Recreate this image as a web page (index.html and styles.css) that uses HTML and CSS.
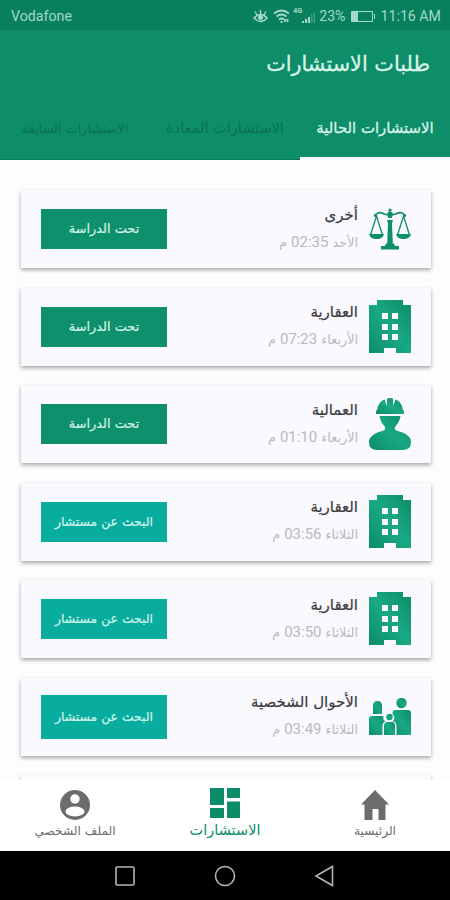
FILE: index.html
```html
<!DOCTYPE html>
<html lang="ar" dir="rtl">
  <head>
    <meta charset="utf-8">
    <title>طلبات الاستشارات</title>
    <link rel="stylesheet" href="styles.css">
  </head>
  <body>
    <svg class="defs" width="0" height="0">
      <defs>
        <linearGradient id="green" x1="0" y1="1" x2="1" y2="0">
          <stop offset="0" stop-color="#0c8c68" />
          <stop offset="0.5" stop-color="#1aa884" />
          <stop offset="1" stop-color="#0c8c68" />
        </linearGradient>
        <symbol id="scales" viewBox="0 0 42 42">
          <g fill="none" stroke="#0c8f6b">
            <path d="M6 7Q10 3 15 6Q18 7 21 6Q24 7 27 6Q32 3 36 7" stroke-width="1.700" />
            <path d="M7.500 8L1.500 27M7.500 8L13.500 27M34.500 8L28.500 27M34.500 8L40.500 27" stroke-width="1.300" />
          </g>
          <g fill="#0c8f6b">
            <circle cx="21" cy="2.200" r="1.600" />
            <circle cx="6.500" cy="7.500" r="1.600" />
            <circle cx="35.500" cy="7.500" r="1.600" />
            <path d="M19 4h4l1 3-1.500 3h-3L18 7zM18 12h6l-1 3 .800 21h-5.600L19 15zM17 35.500h8l1 2.500h4v3.500H12V38h4z" />
            <path d="M0 26h15q-1 5-7.500 5T0 26zM27 26h15q-1 5-7.500 5T27 26z" />
          </g>
        </symbol>
        <symbol id="building" viewBox="0 0 42 54">
          <path fill="url(#green)" fill-rule="evenodd" d="M8 0h26v5h8v48H27v-5H15v5H0V5h8zM13 13v6h6v-6zM23 13v6h6v-6zM13 24v6h6v-6zM23 24v6h6v-6zM13 34v6h6v-6zM23 34v6h6v-6z" />
        </symbol>
        <symbol id="worker" viewBox="0 0 42 54">
          <g fill="url(#green)">
            <path d="M7 17v-3l1-1Q9 5 15.500 2.500L18 9V1.500q3-1 6 0V9l2.500-6.500Q33 5 34 13l1 1v3z" />
            <path d="M10.500 19h21q-1 6-4.500 9.500-2.500 3 0 5Q42 37 42 45q0 8-8 8H8q-8 0-8-8 0-8 15-11.500 2.500-2 0-5-3.500-3.500-4.500-9.500z" />
          </g>
        </symbol>
        <symbol id="family" viewBox="0 0 42 38">
          <g fill="url(#green)">
            <path d="M4 16V8q0-5 4.500-5T13 8v8z" />
            <circle cx="32.500" cy="5" r="5.200" />
            <circle cx="20.500" cy="19" r="3.200" />
            <path d="M0 37V21q0-3 3-3h11.500q-1 4 2 5.500-3 1-3 4V37z" />
            <path d="M27.500 37v-9q0-4-3.500-4.500 3-4-.500-7.500V15q0-3 3-3H39q3 0 3 3v22z" />
            <path d="M15 37v-9q0-4 3.500-4H23q3 0 3 4v9z" />
          </g>
        </symbol>
      </defs>
    </svg>

    <div class="status" dir="ltr">
      <span class="carrier">Vodafone</span>
      <svg class="eye" width="15" height="13" viewBox="0 0 15 13" fill="none" stroke="currentColor">
        <path d="M1 8Q7.500 1 14 8Q7.500 15 1 8zM7.500 4V0M4 5L2 1.500M11 5l2-3.500" stroke-width="1.500" />
        <circle cx="7.500" cy="7.500" r="2.200" fill="currentColor" />
      </svg>
      <svg class="wifi" width="17" height="14" viewBox="0 0 17 14" fill="none" stroke="currentColor" stroke-width="1.800">
        <path d="M1 4.500Q8.500-1.500 16 4.500M3.500 7.500q5-4 10 0M6 10.500q2.500-2 5 0" />
        <path d="M7.500 13h2M12 10v3M14.500 10v3" />
      </svg>
      <span class="net">4G</span>
      <svg class="signal" width="13" height="11" viewBox="0 0 13 11" fill="currentColor">
        <path d="M0 9h2v2H0zM3 7h2v4H3zM6 5h2v6H6z" />
        <path d="M9 2h1.500v9H9zM11.500 0H13v11h-1.500z" opacity="0.350" />
      </svg>
      <span class="percent">23%</span>
      <svg class="battery" width="25" height="11" viewBox="0 0 25 11">
        <path d="M.500.500h21v10H.500zM23.500 3v5" fill="none" stroke="currentColor" />
        <path d="M1 1h6v9H1z" fill="currentColor" />
      </svg>
      <span class="time">11:16 AM</span>
    </div>

    <header class="header">
      <h1 class="title">طلبات الاستشارات</h1>
      <nav class="tabs">
        <a class="tab active">الاستشارات الحالية</a>
        <a class="tab">الاستشارات المعادة</a>
        <a class="tab previous">الاستشارات السابقة</a>
      </nav>
    </header>

    <main class="list">
      <div class="card">
        <svg class="icon" width="42" height="42"><use href="#scales" /></svg>
        <div class="info">
          <div class="name">أخرى</div>
          <div class="date">الأحد <span class="hour">02:35</span> م</div>
        </div>
        <div class="button">تحت الدراسة</div>
      </div>
      <div class="card">
        <svg class="icon" width="42" height="54"><use href="#building" /></svg>
        <div class="info">
          <div class="name">العقارية</div>
          <div class="date">الأربعاء <span class="hour">07:23</span> م</div>
        </div>
        <div class="button">تحت الدراسة</div>
      </div>
      <div class="card">
        <svg class="icon" width="42" height="54"><use href="#worker" /></svg>
        <div class="info">
          <div class="name">العمالية</div>
          <div class="date">الأربعاء <span class="hour">01:10</span> م</div>
        </div>
        <div class="button">تحت الدراسة</div>
      </div>
      <div class="card">
        <svg class="icon" width="42" height="54"><use href="#building" /></svg>
        <div class="info">
          <div class="name">العقارية</div>
          <div class="date">الثلاثاء <span class="hour">03:56</span> م</div>
        </div>
        <div class="button search">البحث عن مستشار</div>
      </div>
      <div class="card">
        <svg class="icon" width="42" height="54"><use href="#building" /></svg>
        <div class="info">
          <div class="name">العقارية</div>
          <div class="date">الثلاثاء <span class="hour">03:50</span> م</div>
        </div>
        <div class="button search">البحث عن مستشار</div>
      </div>
      <div class="card">
        <svg class="icon" width="42" height="38"><use href="#family" /></svg>
        <div class="info">
          <div class="name">الأحوال الشخصية</div>
          <div class="date">الثلاثاء <span class="hour">03:49</span> م</div>
        </div>
        <div class="button search tall">البحث عن مستشار</div>
      </div>
      <div class="card"></div>
    </main>

    <nav class="bottom">
      <a class="item">
        <svg width="30" height="30" viewBox="0 0 30 30" fill="currentColor">
          <path d="M15 0l14 14.500h-3.500V30h-7V19h-6v11h-8V14.500H1z" />
        </svg>
        <span class="label">الرئيسية</span>
      </a>
      <a class="item current">
        <svg width="30" height="30" viewBox="0 0 30 30" fill="currentColor">
          <path d="M0 0h14v17H0zM17 0h13v10H17zM0 20h14v10H0zM17 13.500h13V30H17z" />
        </svg>
        <span class="label">الاستشارات</span>
      </a>
      <a class="item">
        <svg width="30" height="30" viewBox="0 0 30 30">
          <circle cx="15" cy="15" r="15" fill="currentColor" />
          <circle cx="15" cy="9" r="4.700" fill="#fff" />
          <ellipse cx="15" cy="21.500" rx="9.500" ry="5" fill="#fff" />
        </svg>
        <span class="label">الملف الشخصي</span>
      </a>
    </nav>

    <div class="android" dir="ltr">
      <svg width="22" height="22" viewBox="0 0 22 22"><rect x="2" y="2" width="18" height="18" rx="1" /></svg>
      <svg width="22" height="22" viewBox="0 0 22 22"><circle cx="11" cy="11" r="9.500" /></svg>
      <svg width="22" height="22" viewBox="0 0 22 22"><path d="M18.500 1.500v19L2 11z" /></svg>
    </div>
  </body>
</html>
```
FILE: styles.css
```css
* {
  box-sizing: border-box;
}
body {
  margin: 0;
  height: 900px;
  display: flex;
  flex-direction: column;
  overflow: hidden;
  background-color: #fdfdfe;
  font-family: "DejaVu Sans", sans-serif;
}
.defs {
  position: absolute;
}
.status {
  height: 30px;
  flex: none;
  display: flex;
  align-items: center;
  padding: 2px 9px 0 11px;
  background-color: #087f5d;
  color: #a3d9c8;
  font-family: Roboto, sans-serif;
  font-size: 14.2px;
}
.carrier {
  margin-right: auto;
}
.wifi {
  margin-left: 5px;
}
.net {
  align-self: flex-start;
  margin: 5px 0 0 3px;
  font-size: 7px;
  font-weight: bold;
}
.signal {
  margin: 2px 4px 0 0;
}
.battery {
  margin: 0 5px;
}
.header {
  height: 130px;
  flex: none;
  display: flex;
  flex-direction: column;
  background-color: #0e8d69;
  border-bottom: 1px solid #087a59;
}
.title {
  margin: 0;
  padding: 19px 20px 0 0;
  height: 70px;
  color: #d9f5eb;
  font-size: 20.8px;
  font-weight: normal;
  line-height: 30px;
  -webkit-text-stroke: 0.3px;
}
.tabs {
  flex: 1;
  display: grid;
  grid-template-columns: repeat(3, 1fr);
}
.tab {
  margin-bottom: -1px;
  padding-top: 3px;
  line-height: 57px;
  text-align: center;
  white-space: nowrap;
  font-size: 14.5px;
  color: #087252;
}
.active {
  border-bottom: 3px solid #fff;
  font-size: 14.9px;
  color: #d9f5eb;
  -webkit-text-stroke: 0.3px;
}
.previous {
  font-size: 12.9px;
}
.list {
  flex: 1;
  min-height: 0;
  overflow: hidden;
  display: flex;
  flex-direction: column;
  gap: 19.5px;
  padding: 30px 19px 0 21px;
}
.card {
  height: 78px;
  flex: none;
  display: flex;
  align-items: center;
  padding: 0 20px;
  background-color: #f9f9fe;
  box-shadow: 0 2px 4px rgba(0, 0, 0, 0.35);
}
.info {
  margin: 0 11px 0 auto;
  flex: 1;
  white-space: nowrap;
}
.name {
  color: #3c3c40;
  font-size: 15px;
  line-height: 26px;
  -webkit-text-stroke: 0.2px;
}
.date {
  color: #b9b9bf;
  font-size: 12.8px;
  line-height: 28px;
}
.hour {
  font-family: Roboto, sans-serif;
  font-size: 15px;
}
.button {
  width: 126px;
  height: 40px;
  line-height: 39px;
  text-align: center;
  white-space: nowrap;
  font-size: 12.9px;
  background-color: #0e906c;
  color: #d2f3e8;
  -webkit-text-stroke: 0.2px;
}
.search {
  font-size: 12.4px;
  background-color: #08ada0;
}
.tall {
  height: 44px;
  line-height: 43px;
}
.bottom {
  height: 71px;
  flex: none;
  display: grid;
  grid-template-columns: repeat(3, 1fr);
  background-color: #fff;
}
.item {
  display: flex;
  flex-direction: column;
  align-items: center;
  padding-top: 10px;
  color: #6c6c6c;
  font-size: 12.2px;
}
.label {
  line-height: 23px;
}
.current {
  padding-top: 8px;
  color: #0c8c68;
  font-size: 14.5px;
}
.current .label {
  line-height: 25px;
}
.android {
  height: 49px;
  flex: none;
  display: flex;
  justify-content: center;
  align-items: center;
  gap: 78px;
  background-color: #000;
  fill: none;
  stroke: #b4b4b4;
  stroke-width: 1.6;
}
```
